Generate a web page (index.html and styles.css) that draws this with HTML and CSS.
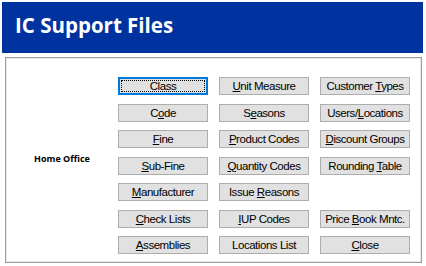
FILE: index.html
```html
<!DOCTYPE html>
<html lang="en">
<head>
  <meta charset="UTF-8">
  <title>IC Support Files</title>
  <link rel="stylesheet" href="styles.css">
</head>
<body>
  <!-- HEADER -->
  <div class="header">
    <h1>IC Support Files</h1>
  </div>

  <!-- PANEL -->
  <div class="panel">
    <div class="label">Home Office</div>
    <div class="btn-grid">
      <button class="btn focused">Class</button>
      <button class="btn"><u>U</u>nit Measure</button>
      <button class="btn">Customer <u>T</u>ypes</button>

      <button class="btn">C<u>o</u>de</button>
      <button class="btn">S<u>e</u>asons</button>
      <button class="btn">Users/<u>L</u>ocations</button>

      <button class="btn"><u>F</u>ine</button>
      <button class="btn"><u>P</u>roduct Codes</button>
      <button class="btn"><u>D</u>iscount Groups</button>

      <button class="btn"><u>S</u>ub-Fine</button>
      <button class="btn"><u>Q</u>uantity Codes</button>
      <button class="btn">Rounding <u>T</u>able</button>

      <button class="btn"><u>M</u>anufacturer</button>
      <button class="btn">Issue <u>R</u>easons</button>
      <div class="empty"></div>

      <button class="btn"><u>C</u>heck Lists</button>
      <button class="btn"><u>I</u>UP Codes</button>
      <button class="btn">Price <u>B</u>ook Mntc.</button>

      <button class="btn"><u>A</u>ssemblies</button>
      <button class="btn">Locations List</button>
      <button class="btn"><u>C</u>lose</button>
    </div>
  </div>
</body>
</html>
```

FILE: styles.css
```css
body {
  margin: 0;
  background: #fff;
  font-family: "Liberation Sans", Arial, sans-serif;
}

/* === HEADER === */
.header {
  margin: 2px 3px 0 2px;
  height: 51px;
  background: #0033a0;
  display: flex;
  align-items: center;
  padding-left: 13px;
}

.header h1 {
  margin: 0 0 6px 0;
  color: #fff;
  font-family: "Open Sans", sans-serif;
  font-weight: bold;
  font-size: 20.5px;
}

/* === PANEL === */
.panel {
  margin: 4px 4px 0 5px;
  border: 1px solid #a0a0a0;
  box-shadow: inset 0 0 0 1px #e8e8e8;
  display: flex;
  height: 204px;
}

.label {
  width: 112px;
  align-self: center;
  text-align: center;
  font-family: "Open Sans", sans-serif;
  font-weight: bold;
  font-size: 9px;
  color: #000;
  margin-top: -3px;
}

.btn-grid {
  display: grid;
  grid-template-columns: 90px 90px 90px;
  grid-template-rows: repeat(7, 18px);
  column-gap: 11px;
  row-gap: 8.5px;
  padding-top: 19px;
}

/* === BUTTONS === */
.btn {
  position: relative;
  margin: 0;
  padding: 0;
  background: #e1e1e1;
  border: 1px solid #adadad;
  font-family: "Liberation Sans", Arial, sans-serif;
  font-size: 11.5px;
  letter-spacing: -0.45px;
  color: #000;
  white-space: nowrap;
}

.btn.focused {
  border-color: #0078d7;
  box-shadow: inset 0 0 0 1px #0078d7;
}

.btn.focused::after {
  content: "";
  position: absolute;
  top: 2px;
  left: 2px;
  right: 2px;
  bottom: 2px;
  border: 1px dotted #000;
}
```
